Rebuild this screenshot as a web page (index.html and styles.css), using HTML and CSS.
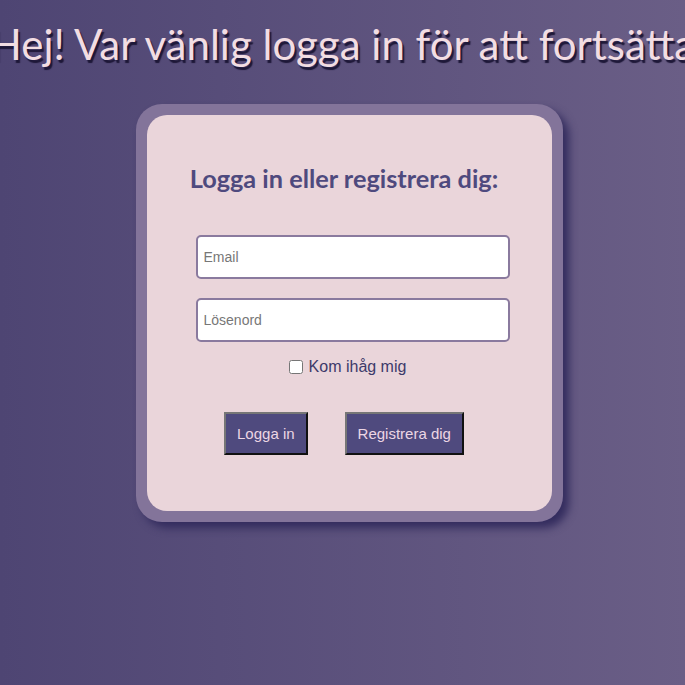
FILE: index.html
```html
<!DOCTYPE html>
<html lang="sv">
<head>
<meta charset="utf-8">
<title>Logga in</title>
<link rel="stylesheet" href="styles.css">
</head>
<body>
<h1 class="title">Hej! Var vänlig logga in för att fortsätta</h1>
<div class="wrap">
  <div class="card">
    <div class="card-inner">
      <h2 class="heading">Logga in eller registrera dig:</h2>
      <form class="form">
        <input class="field" type="email" placeholder="Email">
        <input class="field" type="password" placeholder="Lösenord">
        <label class="remember"><input type="checkbox" class="check"> Kom ihåg mig</label>
        <div class="buttons">
          <button type="button" class="btn">Logga in</button>
          <button type="button" class="btn">Registrera dig</button>
        </div>
      </form>
    </div>
  </div>
</div>
</body>
</html>
```
FILE: styles.css
```css
html, body {
  margin: 0;
  height: 100%;
}
body {
  background: linear-gradient(90deg, #4e4573 0%, #6a5e86 100%);
  overflow: hidden;
  font-family: "Liberation Sans", Arial, sans-serif;
}
.title {
  margin: 0 -40px;
  padding-top: 20px;
  font-family: Lato, "Open Sans", sans-serif;
  font-weight: 400;
  font-size: 42px;
  line-height: 48px;
  color: #f2dde3;
  text-align: center;
  white-space: nowrap;
  text-shadow: 2px 3px 1px #1e1838;
}
.wrap {
  display: flex;
  justify-content: center;
  padding-left: 14px;
  margin-top: 36px;
}
.card {
  width: 405px;
  padding: 11px;
  background: #83749a;
  border-radius: 26px;
  box-shadow: 6px 6px 8px #332c5e;
}
.card-inner {
  background: #ead5da;
  border-radius: 20px;
  padding: 48px 0 56px;
}
.heading {
  margin: 0;
  padding-right: 11px;
  text-align: center;
  font-family: Lato, "Open Sans", sans-serif;
  font-weight: 700;
  font-size: 25.3px;
  line-height: 30px;
  color: #4f4a7e;
}
.form {
  display: flex;
  flex-direction: column;
  align-items: center;
  margin-top: 42px;
}
.field {
  box-sizing: border-box;
  width: 314px;
  height: 44px;
  margin: 0 0 19px 6px;
  border: 2px solid #8a7a9e;
  border-radius: 5px;
  background: #fff;
  padding: 0 6px;
  font-family: "Liberation Sans", Arial, sans-serif;
  font-size: 14px;
}
.field::placeholder {
  color: #777;
}
.field:last-of-type {
  margin-bottom: 14px;
}
.remember {
  display: flex;
  align-items: center;
  gap: 6px;
  font-size: 16px;
  color: #3d3a6a;
  margin-top: 2px;
  margin-left: -4px;
}
.check {
  margin: 0;
  width: 14px;
  height: 14px;
}
.buttons {
  display: flex;
  gap: 37px;
  margin-top: 36px;
  margin-left: -11px;
}
.btn {
  height: 43px;
  padding: 0 11px;
  background: #4f4a7e;
  color: #ecd6e4;
  font-family: "Liberation Sans", Arial, sans-serif;
  font-size: 15px;
  border: 2px solid;
  border-color: #767676 #111 #111 #767676;
}
```
